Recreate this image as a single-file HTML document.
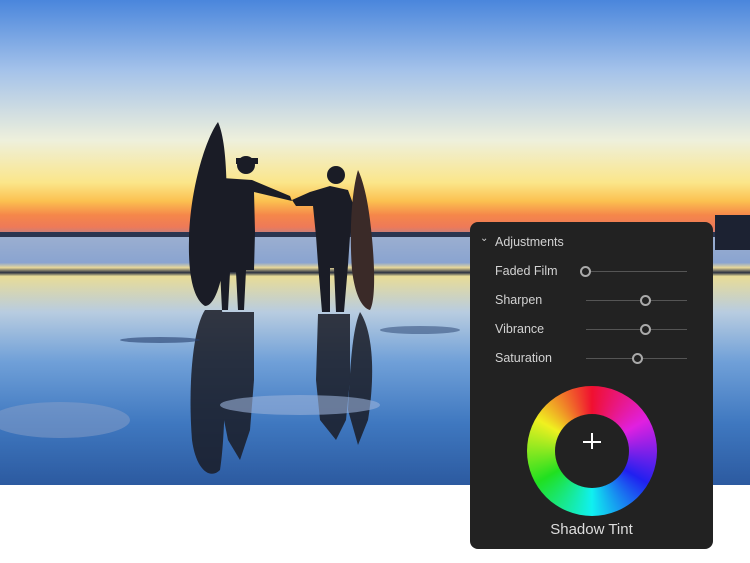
<!DOCTYPE html>
<html><head><style>
body{margin:0;width:750px;height:563px;background:#fff;position:relative;overflow:hidden;font-family:"Liberation Sans",sans-serif}
svg.photo{position:absolute;left:0;top:0}
.panel{position:absolute;left:470px;top:222px;width:243px;height:327px;background:#222;border-radius:8px;color:#d2d2d2;font-size:12.5px}
.row{position:absolute;left:25px}
.track{position:absolute;height:1px;background:#555}
.knob{position:absolute;width:7px;height:7px;border:2px solid #aaa;border-radius:50%;background:#222}
.wheel{position:absolute;left:57px;top:164px;width:130px;height:130px;border-radius:50%;background:conic-gradient(#f01030,#e020e0 60deg,#2020f0 120deg,#10f0f0 180deg,#20e020 240deg,#f0f020 300deg,#f01030)}
.inner{position:absolute;left:28px;top:28px;width:74px;height:74px;border-radius:50%;background:#222}
</style></head><body>
<svg class="photo" width="750" height="485" viewBox="0 0 750 485">
<defs>
<linearGradient id="sky" x1="0" y1="0" x2="0" y2="234" gradientUnits="userSpaceOnUse">
<stop offset="0" stop-color="#4a86dc"/><stop offset="0.3" stop-color="#a4c2ea"/>
<stop offset="0.6" stop-color="#eef0dc"/><stop offset="0.78" stop-color="#fbe68a"/>
<stop offset="0.86" stop-color="#fbc050"/><stop offset="0.92" stop-color="#f5864a"/>
<stop offset="0.97" stop-color="#ee7a58"/><stop offset="1" stop-color="#c08080"/>
</linearGradient>
<linearGradient id="water" x1="0" y1="238" x2="0" y2="485" gradientUnits="userSpaceOnUse">
<stop offset="0" stop-color="#9aaed0"/><stop offset="0.1" stop-color="#8aa4d0"/>
<stop offset="0.12" stop-color="#e8d89a"/><stop offset="0.14" stop-color="#2a3040"/>
<stop offset="0.155" stop-color="#e8dc98"/><stop offset="0.3" stop-color="#b8cce0"/>
<stop offset="0.5" stop-color="#70a0d8"/><stop offset="0.75" stop-color="#3f78c0"/>
<stop offset="1" stop-color="#2c5aa0"/>
</linearGradient>
</defs>
<rect width="750" height="234" fill="url(#sky)"/>
<rect y="232" width="750" height="6" fill="#2a3550"/>
<rect y="237" width="750" height="248" fill="url(#water)"/>
<rect x="715" y="215" width="35" height="35" fill="#1c2232"/>
<g fill="#1a1c26">
<path d="M218 122 C205 140 190 190 189 240 C188 280 195 300 205 306 C215 306 224 280 226 240 C228 180 226 140 218 122Z"/>
<circle cx="246" cy="165" r="9"/><path d="M236 158 h22 v6 h-22z"/>
<path d="M222 178 L252 180 L290 196 L292 201 L254 192 L255 232 L254 270 L246 270 L244 310 L238 310 L236 272 L230 272 L228 310 L222 310 L220 270 L218 230Z"/>
<circle cx="336" cy="175" r="9"/>
<path d="M292 200 L310 192 L330 186 L348 190 L356 212 L350 236 L348 265 L344 312 L336 312 L334 268 L330 268 L330 312 L322 312 L318 264 L316 236 L313 206 L296 206Z"/>
<path d="M358 170 C352 190 349 230 352 270 C355 295 362 308 370 310 C376 300 375 260 370 220 C367 195 362 178 358 170Z" fill="#3a2a28"/>
</g>
<g fill="#1a1c26" opacity="0.85">
<path d="M205 310 C192 330 188 390 192 440 C196 470 210 480 220 470 C226 430 226 360 222 310Z"/>
<path d="M220 312 L254 312 L254 380 L250 430 L240 460 L228 440 L220 400Z"/>
<path d="M318 314 L350 314 L350 380 L346 420 L336 440 L320 420 L316 380Z"/>
<path d="M360 312 C372 330 376 370 368 420 L358 445 L348 410 C350 370 352 330 360 312Z"/>
</g>
<ellipse cx="300" cy="405" rx="80" ry="10" fill="#9ab0d8" opacity="0.6"/>
<ellipse cx="60" cy="420" rx="70" ry="18" fill="#8aa0c8" opacity="0.5"/>
<ellipse cx="160" cy="340" rx="40" ry="3" fill="#26406e" opacity="0.6"/>
<ellipse cx="420" cy="330" rx="40" ry="4" fill="#26406e" opacity="0.5"/>
</svg>
<div class="panel">
<div style="position:absolute;left:10px;top:11px;font-size:10px">&#8964;</div>
<div class="row" style="top:13px">Adjustments</div>
<div class="row" style="top:42px">Faded Film</div>
<div class="row" style="top:71px">Sharpen</div>
<div class="row" style="top:100px">Vibrance</div>
<div class="row" style="top:129px">Saturation</div>
<div class="track" style="left:116px;top:49px;width:101px"></div><div class="knob" style="left:110px;top:44px"></div>
<div class="track" style="left:116px;top:78px;width:101px"></div><div class="knob" style="left:170px;top:73px"></div>
<div class="track" style="left:116px;top:107px;width:101px"></div><div class="knob" style="left:170px;top:102px"></div>
<div class="track" style="left:116px;top:136px;width:101px"></div><div class="knob" style="left:162px;top:131px"></div>
<div class="wheel"><div class="inner"></div></div>
<div style="position:absolute;left:113px;top:219px;width:18px;height:1.5px;background:#fff"></div>
<div style="position:absolute;left:121px;top:211px;width:1.5px;height:16px;background:#fff"></div>
<div style="position:absolute;left:0;width:243px;top:299px;text-align:center;font-size:15px;color:#ddd">Shadow Tint</div>
</div>
</body></html>
